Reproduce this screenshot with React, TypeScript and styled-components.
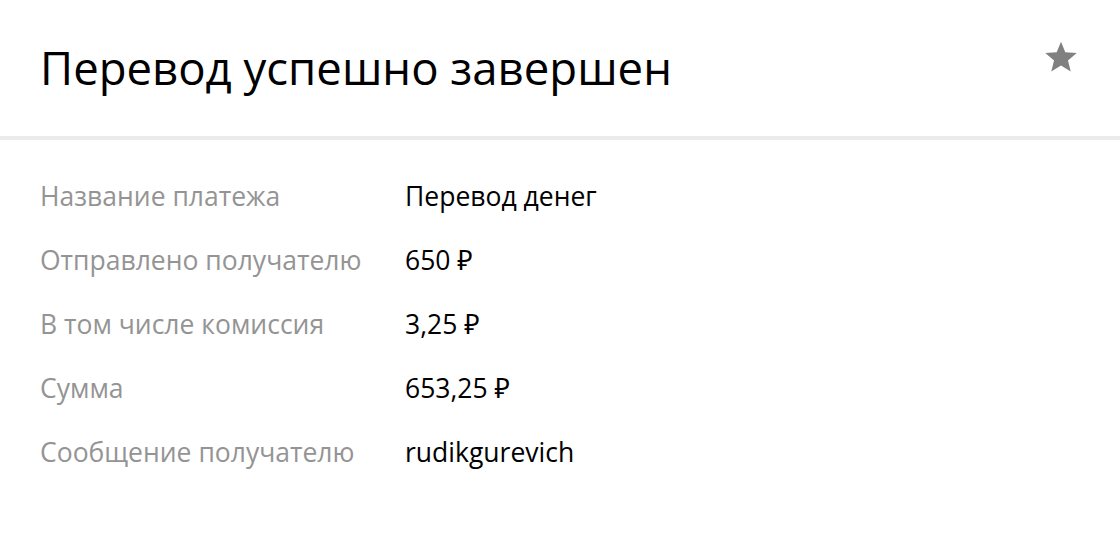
import styled, { createGlobalStyle } from 'styled-components';

const GlobalStyle = createGlobalStyle`
  body {
    margin: 0;
    background: #ffffff;
    font-family: 'Open Sans', 'Noto Sans', sans-serif;
  }
`;

const rows = [
  { label: 'Название платежа', value: 'Перевод денег' },
  { label: 'Отправлено получателю', value: '650 ₽' },
  { label: 'В том числе комиссия', value: '3,25 ₽' },
  { label: 'Сумма', value: '653,25 ₽' },
  { label: 'Сообщение получателю', value: 'rudikgurevich' },
];

const StarIcon = () => (
  <svg width="34" height="32" viewBox="0 0 24 23" fill="#808080">
    <path d="M12 0.5l3.1 7.6 8.2 0.6-6.3 5.3 2 8-7-4.4-7 4.4 2-8L0.7 8.7l8.2-0.6z" />
  </svg>
);

const App = () => (
  <Page>
    <GlobalStyle />
    <Header>
      <Title>Перевод успешно завершен</Title>
      <FavButton aria-label="В избранное">
        <StarIcon />
      </FavButton>
    </Header>
    <Details>
      {rows.map((r) => (
        <Row key={r.label}>
          <Label>{r.label}</Label>
          <Value>{r.value}</Value>
        </Row>
      ))}
    </Details>
  </Page>
);

export default App;

const Page = styled.div`
  width: 1120px;
  height: 534px;
  background: #ffffff;
  overflow: hidden;
`;

const Header = styled.div`
  display: flex;
  align-items: flex-start;
  justify-content: space-between;
  height: 140px;
  box-sizing: border-box;
  padding: 37px 40px 0 40px;
  border-bottom: 4px solid #ebebeb;
`;

const Title = styled.h1`
  margin: 0;
  font-size: 45.5px;
  font-weight: 400;
  line-height: 60px;
  color: #000000;
`;

const FavButton = styled.button`
  border: none;
  background: transparent;
  padding: 0;
  margin: 4px 2px 0 0;
  cursor: pointer;
  display: flex;
`;

const Details = styled.div`
  display: flex;
  flex-direction: column;
  gap: 28px;
  padding: 38px 40px 0 40px;
`;

const Row = styled.div`
  display: grid;
  grid-template-columns: 365px 1fr;
  align-items: baseline;
`;

const Label = styled.span`
  font-size: 26.5px;
  line-height: 36px;
  color: #949494;
`;

const Value = styled.span`
  font-size: 26.5px;
  line-height: 36px;
  color: #000000;
`;
